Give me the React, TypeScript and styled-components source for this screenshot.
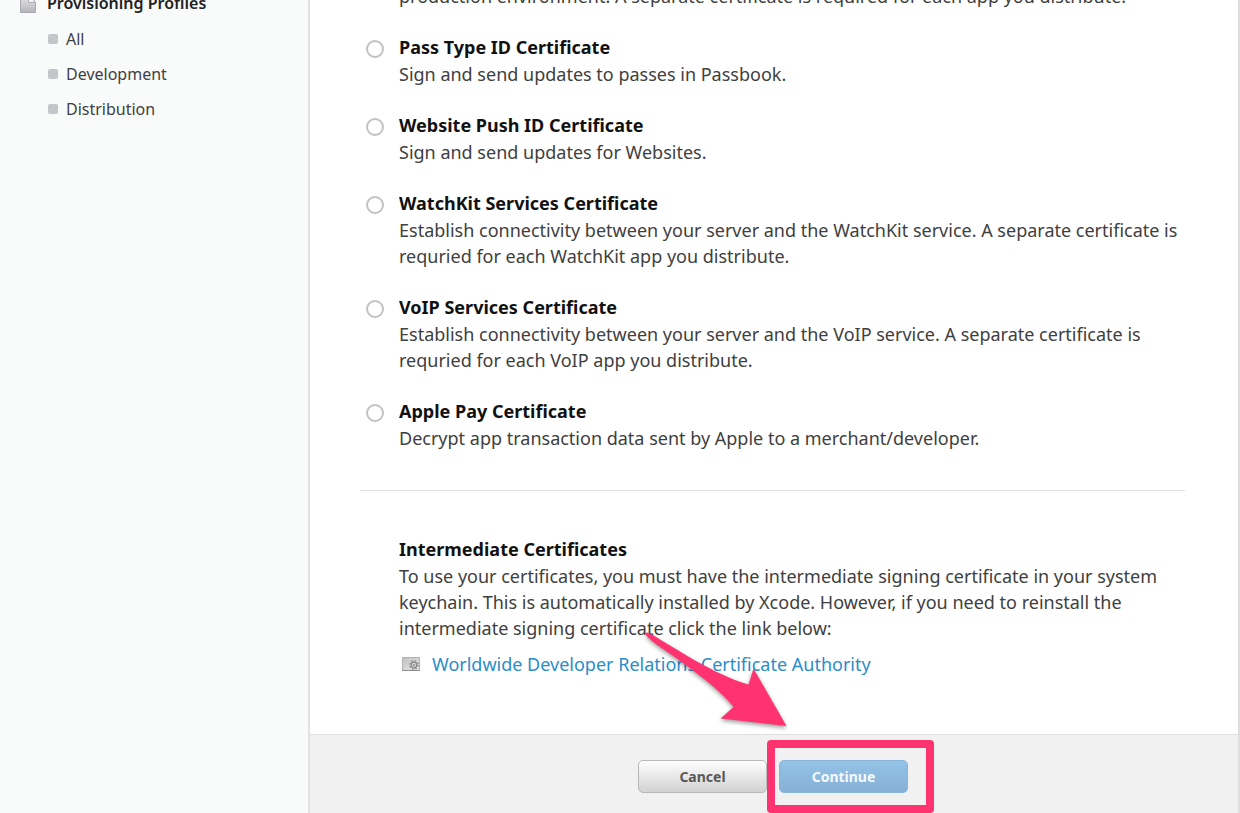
import React from "react";
import styled, { createGlobalStyle } from "styled-components";

const GlobalStyle = createGlobalStyle`
  * { box-sizing: border-box; }
  html, body { margin: 0; }
  body {
    background: #fff;
    color: #404040;
    font: 400 18px/26px "Noto Sans", "Open Sans", sans-serif;
    overflow: hidden;
  }
`;

const Page = styled.div`
  display: flex;
  height: 100vh;
  overflow: hidden;
`;

const Sidebar = styled.nav`
  flex: 0 0 310px;
  padding-left: 20px;
  background: #f9fbfa;
  border-right: 2px solid #e1e3e3;
`;

const SidebarHeading = styled.h2`
  display: flex;
  align-items: center;
  gap: 11px;
  height: 26px;
  margin: -10px 0 5px;
  color: #222;
  font-size: 16px;
  font-weight: 600;
`;

const SidebarList = styled.ul`
  margin: 0;
  padding: 0 0 0 28px;
  list-style: none;
`;

const SidebarLink = styled.a`
  display: flex;
  align-items: center;
  gap: 8px;
  height: 35px;
  color: #404040;
  font-size: 16px;
  text-decoration: none;

  &::before {
    content: "";
    width: 10px;
    height: 10px;
    border-radius: 2px;
    background: #c4c6c9;
  }
`;

const Main = styled.main`
  flex: 1;
  min-width: 0;
  display: flex;
  flex-direction: column;
  border-right: 2px solid #dedede;
`;

const Content = styled.div`
  flex: 1;
  padding: 0 53px 0 50px;
`;

const Options = styled.div`
  display: flex;
  flex-direction: column;
  gap: 25px;
  margin-top: -18px;
  padding-bottom: 39px;
  border-bottom: 1px solid #dfdfdf;
`;

const Option = styled.div`
  display: grid;
  grid-template-columns: 18px 1fr;
  column-gap: 15px;
  padding-left: 6px;
`;

const Radio = styled.input`
  appearance: none;
  width: 18px;
  height: 18px;
  margin: 6px 0 0;
  border: 2px solid #c2c2c2;
  border-radius: 50%;
  background: #fff;

  &:checked {
    background: radial-gradient(#555 40%, #fff 45%);
  }
`;

const OptionTitle = styled.label`
  color: #111;
  font-weight: 700;
`;

const Text = styled.p`
  grid-column: 2;
  margin: 1px 0 0;
`;

const Intermediate = styled.section`
  padding: 45px 0 0 39px;
`;

const SectionTitle = styled.h3`
  margin: 0;
  color: #111;
  font-size: 18px;
  font-weight: 700;
`;

const DownloadLink = styled.a`
  display: flex;
  align-items: center;
  gap: 12px;
  margin: 10px 0 0 3px;
  color: #2a8dc9;
  text-decoration: none;
`;

const Footer = styled.footer`
  display: flex;
  justify-content: center;
  gap: 12px;
  height: 79px;
  padding: 25px 2px 0 0;
  background: #f1f1f1;
  border-top: 1px solid #dfdfdf;
`;

const Button = styled.button<{ $primary?: boolean }>`
  width: 129px;
  height: 33px;
  padding: 0;
  border: ${(p) => (p.$primary ? "1px solid #85b5d8" : "1px solid #b9b9b9")};
  border-radius: 5px;
  background: ${(p) =>
    p.$primary
      ? "linear-gradient(#94c3e6, #86b0d6)"
      : "linear-gradient(#fefefe, #d2d2d2)"};
  color: ${(p) => (p.$primary ? "#f4f9fd" : "#595959")};
  font: 700 14px/20px "Noto Sans", "Open Sans", sans-serif;
`;

const Callout = styled.div`
  position: relative;
  height: 33px;
`;

const CalloutFrame = styled.div`
  position: absolute;
  inset: -20px -26px -20px -12px;
  border: 8px solid #ff3370;
  border-radius: 4px;
  pointer-events: none;
`;

const CalloutArrow = styled.svg`
  position: absolute;
  left: -144px;
  top: -138px;
  overflow: visible;
  pointer-events: none;
  filter: drop-shadow(0 2px 2px rgba(0, 0, 0, 0.4));
`;

const ProfileIcon = () => (
  <svg width="16" height="20" viewBox="0 0 16 20" aria-hidden="true">
    <defs>
      <linearGradient id="sheet" x1="0" y1="0" x2="0" y2="1">
        <stop offset="0.3" stopColor="#dcdce0" />
        <stop offset="1" stopColor="#b4b5ba" />
      </linearGradient>
    </defs>
    <path d="M.5.5h8l7 9v10H.5z" fill="url(#sheet)" stroke="#aaabb0" />
    <path d="M8.500.5v9h7z" fill="#f3f3f5" stroke="#b0b1b5" />
  </svg>
);

const CertificateIcon = () => (
  <svg width="18" height="15" viewBox="0 0 18 15" aria-hidden="true">
    <defs>
      <linearGradient id="card" x1="0" y1="0" x2="1" y2="1">
        <stop offset="0" stopColor="#bfc0c0" />
        <stop offset="1" stopColor="#e9e9e9" />
      </linearGradient>
    </defs>
    <path d="M.5.5h17v13H.5z" fill="url(#card)" stroke="#b2b2b2" />
    <path d="M0 13.500h18" stroke="#8e8e8e" />
    <circle cx="12" cy="8" r="4.200" fill="none" stroke="#9a9a9a" strokeWidth="1.600" strokeDasharray="1.800 1.500" />
    <circle cx="12" cy="8" r="2.800" fill="#d8d8d8" stroke="#8b8b8b" strokeWidth="1.300" />
    <circle cx="12" cy="8" r="1" fill="#888" />
  </svg>
);

const options = [
  {
    id: "pass",
    title: "Pass Type ID Certificate",
    text: "Sign and send updates to passes in Passbook.",
  },
  {
    id: "website",
    title: "Website Push ID Certificate",
    text: "Sign and send updates for Websites.",
  },
  {
    id: "watchkit",
    title: "WatchKit Services Certificate",
    text: "Establish connectivity between your server and the WatchKit service. A separate certificate is requried for each WatchKit app you distribute.",
  },
  {
    id: "voip",
    title: "VoIP Services Certificate",
    text: "Establish connectivity between your server and the VoIP service. A separate certificate is requried for each VoIP app you distribute.",
  },
  {
    id: "applepay",
    title: "Apple Pay Certificate",
    text: "Decrypt app transaction data sent by Apple to a merchant/developer.",
  },
];

export default function App() {
  return (
    <>
      <GlobalStyle />
      <Page>
        <Sidebar>
          <SidebarHeading>
            <ProfileIcon />
            Provisioning Profiles
          </SidebarHeading>
          <SidebarList>
            {["All", "Development", "Distribution"].map((name) => (
              <li key={name}>
                <SidebarLink href="#">{name}</SidebarLink>
              </li>
            ))}
          </SidebarList>
        </Sidebar>
        <Main>
          <Content>
            <Options>
              <Option>
                <Text>
                  production environment. A separate certificate is required for each app you distribute.
                </Text>
              </Option>
              {options.map((o) => (
                <Option key={o.id}>
                  <Radio type="radio" name="certificate" id={o.id} />
                  <OptionTitle htmlFor={o.id}>{o.title}</OptionTitle>
                  <Text>{o.text}</Text>
                </Option>
              ))}
            </Options>
            <Intermediate>
              <SectionTitle>Intermediate Certificates</SectionTitle>
              <Text>
                To use your certificates, you must have the intermediate signing certificate in your system
                keychain. This is automatically installed by Xcode. However, if you need to reinstall the
                intermediate signing certificate click the link below:
              </Text>
              <DownloadLink href="#">
                <CertificateIcon />
                Worldwide Developer Relations Certificate Authority
              </DownloadLink>
            </Intermediate>
          </Content>
          <Footer>
            <Button type="button">Cancel</Button>
            <Callout>
              <Button type="button" $primary>
                Continue
              </Button>
              <CalloutFrame />
              <CalloutArrow width="160" height="112" viewBox="0 0 160 112" aria-hidden="true">
                <path
                  d="M10.500 11.500C11 10 13 10.500 15 11.500C40 26 80 53 113.500 62.500L118.500 46.500L151.500 104L85.500 96.500L98.500 85C85 67 50 42 25 25C15 18 11 14 10.500 11.500Z"
                  fill="#ff3370"
                />
              </CalloutArrow>
            </Callout>
          </Footer>
        </Main>
      </Page>
    </>
  );
}
